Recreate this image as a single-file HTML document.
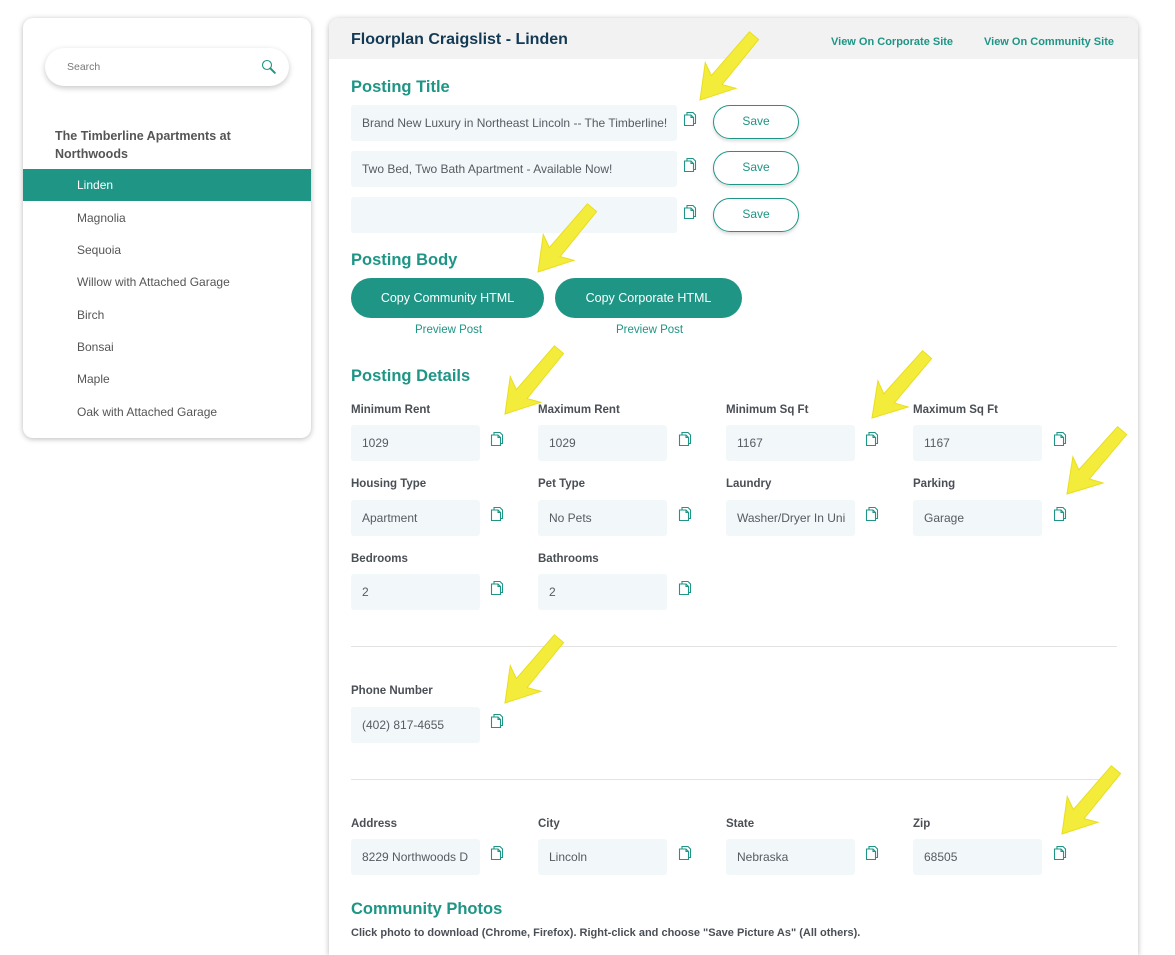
<!DOCTYPE html>
<html><head><meta charset="utf-8">
<style>
*{box-sizing:border-box;margin:0;padding:0}
html,body{width:1175px;height:955px;overflow:hidden}
body{background:#fff;font-family:"Liberation Sans",sans-serif;position:relative;color:#4a4f55}
.a{position:absolute}
.card{background:#fff;border-radius:10px;box-shadow:0 1px 6px rgba(0,0,0,.28)}
.nav{position:absolute;left:77px;font-size:12px;color:#555}
.h{position:absolute;left:351px;color:#1e9585;font-weight:bold;font-size:16.5px}
.inp{position:absolute;background:#f2f7fa;border-radius:3px;height:36px;font-size:12px;color:#555b61;padding-left:11px;line-height:36px;white-space:nowrap;overflow:hidden}
.lbl{position:absolute;font-size:11.5px;font-weight:bold;color:#4a4f55}
.save{position:absolute;left:713px;width:86px;height:34px;border:1.5px solid #1e9585;border-radius:17px;text-align:center;line-height:31px;font-size:12px;color:#1e9585;box-shadow:0 2px 3px rgba(0,0,0,.15)}
.btn{position:absolute;top:278px;height:40px;border-radius:20px;background:#1e9585;color:#fff;font-size:12.5px;text-align:center;line-height:40px}
.pv{position:absolute;top:324px;font-size:11.5px;color:#1e9585}
.hr{position:absolute;left:351px;width:766px;height:1px;background:#e3e3e3}
svg.c{position:absolute;width:16px;height:16px}
</style></head><body>
<svg width="0" height="0" style="position:absolute"><defs>
<symbol id="cp" viewBox="0 0 16 16"><g fill="none" stroke="#1e9585" stroke-width="1.1"><path d="M4 3.5V1.5h6l2.5 2.5V12.5h-2"/><path d="M1.5 4h6.5l2.5 2.5v8H1.5z"/><path d="M8 4v2.5h2.5"/></g></symbol>
</defs></svg>

<div class="a card" style="left:23px;top:18px;width:288px;height:420px"></div>
<div class="a" style="left:45px;top:48px;width:244px;height:38px;border-radius:19px;background:#fff;box-shadow:0 2px 6px rgba(0,0,0,.22)"></div>
<div class="a" style="left:67px;top:61px;font-size:10.5px;color:#777">Search</div>
<svg class="a" style="left:261px;top:59px" width="16" height="16" viewBox="0 0 16 16"><circle cx="6" cy="6" r="4.5" fill="none" stroke="#1e9585" stroke-width="1.1"/><path d="M9.3 9.3l4.5 4.5" stroke="#1e9585" stroke-width="2" stroke-linecap="round"/></svg>
<div class="a" style="left:55px;top:127px;font-size:12.5px;font-weight:bold;color:#555;line-height:18px">The Timberline Apartments at<br>Northwoods</div>
<div class="a" style="left:23px;top:169px;width:288px;height:32px;background:#1e9585"></div>
<div class="nav" style="top:178px;color:#fff">Linden</div>
<div class="nav" style="top:211px">Magnolia</div>
<div class="nav" style="top:243px">Sequoia</div>
<div class="nav" style="top:275px">Willow with Attached Garage</div>
<div class="nav" style="top:308px">Birch</div>
<div class="nav" style="top:340px">Bonsai</div>
<div class="nav" style="top:372px">Maple</div>
<div class="nav" style="top:405px">Oak with Attached Garage</div>

<div class="a card" style="left:329px;top:18px;width:809px;height:937px;overflow:hidden;border-bottom-left-radius:0;border-bottom-right-radius:0"><div style="height:41px;background:#f3f2f2"></div></div>
<div class="a" style="left:351px;top:31px;font-size:16px;font-weight:bold;color:#133a55">Floorplan Craigslist - Linden</div>
<div class="a" style="left:831px;top:36px;font-size:11px;font-weight:bold;color:#1e9585">View On Corporate Site</div>
<div class="a" style="left:984px;top:36px;font-size:11px;font-weight:bold;color:#1e9585">View On Community Site</div>

<div class="h" style="top:78px">Posting Title</div>
<div class="inp" style="left:351px;top:105px;width:326px">Brand New Luxury in Northeast Lincoln -- The Timberline!</div>
<div class="inp" style="left:351px;top:151px;width:326px">Two Bed, Two Bath Apartment - Available Now!</div>
<div class="inp" style="left:351px;top:197px;width:326px"></div>
<svg class="c" style="left:683px;top:111px"><use href="#cp"/></svg>
<svg class="c" style="left:683px;top:157px"><use href="#cp"/></svg>
<svg class="c" style="left:683px;top:204px"><use href="#cp"/></svg>
<div class="save" style="top:105px">Save</div>
<div class="save" style="top:151px">Save</div>
<div class="save" style="top:198px">Save</div>

<div class="h" style="top:251px">Posting Body</div>
<div class="btn" style="left:351px;width:193px">Copy Community HTML</div>
<div class="btn" style="left:555px;width:187px">Copy Corporate HTML</div>
<div class="pv" style="left:415px">Preview Post</div>
<div class="pv" style="left:616px">Preview Post</div>

<div class="h" style="top:367px">Posting Details</div>

<div class="lbl" style="left:351px;top:404px">Minimum Rent</div>
<div class="lbl" style="left:538px;top:404px">Maximum Rent</div>
<div class="lbl" style="left:726px;top:404px">Minimum Sq Ft</div>
<div class="lbl" style="left:913px;top:404px">Maximum Sq Ft</div>
<div class="inp" style="left:351px;top:425px;width:129px">1029</div>
<div class="inp" style="left:538px;top:425px;width:129px">1029</div>
<div class="inp" style="left:726px;top:425px;width:129px">1167</div>
<div class="inp" style="left:913px;top:425px;width:129px">1167</div>
<svg class="c" style="left:490px;top:431px"><use href="#cp"/></svg>
<svg class="c" style="left:678px;top:431px"><use href="#cp"/></svg>
<svg class="c" style="left:865px;top:431px"><use href="#cp"/></svg>
<svg class="c" style="left:1053px;top:431px"><use href="#cp"/></svg>

<div class="lbl" style="left:351px;top:478px">Housing Type</div>
<div class="lbl" style="left:538px;top:478px">Pet Type</div>
<div class="lbl" style="left:726px;top:478px">Laundry</div>
<div class="lbl" style="left:913px;top:478px">Parking</div>
<div class="inp" style="left:351px;top:500px;width:129px">Apartment</div>
<div class="inp" style="left:538px;top:500px;width:129px">No Pets</div>
<div class="inp" style="left:726px;top:500px;width:129px">Washer/Dryer In Uni</div>
<div class="inp" style="left:913px;top:500px;width:129px">Garage</div>
<svg class="c" style="left:490px;top:506px"><use href="#cp"/></svg>
<svg class="c" style="left:678px;top:506px"><use href="#cp"/></svg>
<svg class="c" style="left:865px;top:506px"><use href="#cp"/></svg>
<svg class="c" style="left:1053px;top:506px"><use href="#cp"/></svg>

<div class="lbl" style="left:351px;top:553px">Bedrooms</div>
<div class="lbl" style="left:538px;top:553px">Bathrooms</div>
<div class="inp" style="left:351px;top:574px;width:129px">2</div>
<div class="inp" style="left:538px;top:574px;width:129px">2</div>
<svg class="c" style="left:490px;top:580px"><use href="#cp"/></svg>
<svg class="c" style="left:678px;top:580px"><use href="#cp"/></svg>

<div class="hr" style="top:646px"></div>
<div class="lbl" style="left:351px;top:685px">Phone Number</div>
<div class="inp" style="left:351px;top:707px;width:129px">(402) 817-4655</div>
<svg class="c" style="left:490px;top:713px"><use href="#cp"/></svg>

<div class="hr" style="top:779px"></div>
<div class="lbl" style="left:351px;top:818px">Address</div>
<div class="lbl" style="left:538px;top:818px">City</div>
<div class="lbl" style="left:726px;top:818px">State</div>
<div class="lbl" style="left:913px;top:818px">Zip</div>
<div class="inp" style="left:351px;top:839px;width:129px">8229 Northwoods D</div>
<div class="inp" style="left:538px;top:839px;width:129px">Lincoln</div>
<div class="inp" style="left:726px;top:839px;width:129px">Nebraska</div>
<div class="inp" style="left:913px;top:839px;width:129px">68505</div>
<svg class="c" style="left:490px;top:845px"><use href="#cp"/></svg>
<svg class="c" style="left:678px;top:845px"><use href="#cp"/></svg>
<svg class="c" style="left:865px;top:845px"><use href="#cp"/></svg>
<svg class="c" style="left:1053px;top:845px"><use href="#cp"/></svg>

<div class="h" style="top:900px">Community Photos</div>
<div class="a" style="left:351px;top:927px;font-size:11px;font-weight:bold;color:#4a4f55">Click photo to download (Chrome, Firefox). Right-click and choose "Save Picture As" (All others).</div>

<svg class="a" style="left:0;top:0" width="1175" height="955">
<defs><polygon id="ar" points="0,0 32,-20 26,-7 84,-6 84,6 26,7 32,20" fill="#f4ec3a" stroke="#e8de20" stroke-width="1"/></defs>
<use href="#ar" transform="translate(700,100) rotate(-50)"/>
<use href="#ar" transform="translate(538,272) rotate(-50)"/>
<use href="#ar" transform="translate(505,414) rotate(-50)"/>
<use href="#ar" transform="translate(872,418) rotate(-49)"/>
<use href="#ar" transform="translate(1067,494) rotate(-49)"/>
<use href="#ar" transform="translate(505,703) rotate(-50)"/>
<use href="#ar" transform="translate(1062,834) rotate(-50)"/>
</svg>
</body></html>
